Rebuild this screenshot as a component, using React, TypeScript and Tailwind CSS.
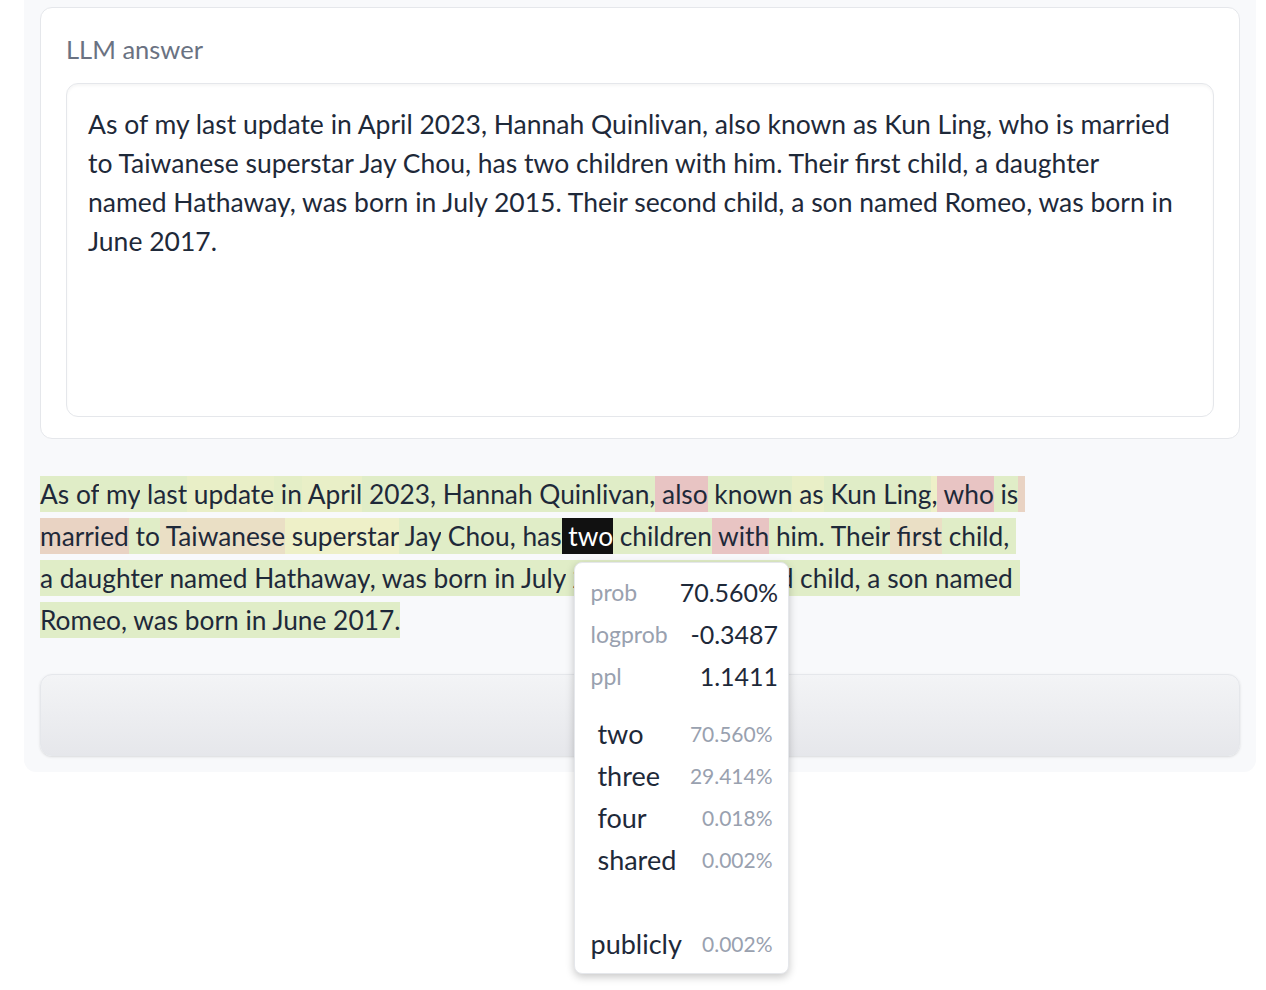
type Tok = [string, string]

const G = 'bg-[#e0edc7]'
const G2 = 'bg-[#e4eec6]'
const Y1 = 'bg-[#e9efc7]'
const Y2 = 'bg-[#eef0c8]'
const R = 'bg-[#e8c4c3]'
const O = 'bg-[#e9d3c3]'
const T = 'bg-[#eadfc5]'
const SEL = 'sel'

const LINES: Tok[][] = [
  [
    ['As', G], [' of', G], [' my', G], [' last', G], [' update', Y1], [' in', G2], [' April', Y1],
    [' 2023', G], [',', G], [' Hannah', G], [' Quin', G], ['livan', G], [',', G], [' also', R],
    [' known', G], [' as', Y1], [' Kun', G], [' Ling', G], [',', Y2], [' who', R], [' is', G], [' ', O],
  ],
  [
    ['married', O], [' to', G], [' Taiwan', T], ['ese', T], [' superstar', Y2], [' Jay', G], [' Chou', G],
    [',', G], [' has', G], [' two', SEL], [' children', G], [' with', R], [' him', G], ['.', G],
    [' Their', G], [' first', T], [' child', G], [',', G], [' ', G],
  ],
  [
    ['a', G], [' daughter', G], [' named', G], [' Hathaway', G], [',', G], [' was', G], [' born', G],
    [' in', G], [' July', G], [' 2015', G], ['.', G], [' Their', G], [' second', G], [' child', G],
    [',', G], [' a', G], [' son', G], [' named', G], [' ', G],
  ],
  [
    ['Romeo', G], [',', G], [' was', G], [' born', G], [' in', G], [' June', G], [' 2017', G], ['.', G],
  ],
]

const ANSWER = [
  'As of my last update in April 2023, Hannah Quinlivan, also known as Kun Ling, who is married',
  'to Taiwanese superstar Jay Chou, has two children with him. Their first child, a daughter',
  'named Hathaway, was born in July 2015. Their second child, a son named Romeo, was born in',
  'June 2017.',
]

const CANDIDATES = [
  { tok: ' two', p: '70.560%' },
  { tok: ' three', p: '29.414%' },
  { tok: ' four', p: '0.018%' },
  { tok: ' shared', p: '0.002%' },
  { tok: '\u00a0', p: '' },
  { tok: 'publicly', p: '0.002%' },
]

function Tooltip() {
  return (
    <div className="absolute left-[12px] top-[44px] z-10 w-[215px] rounded-lg border border-gray-200 bg-white pl-4 pr-4 pt-[8px] pb-[8px] shadow-[0_3px_8px_rgba(0,0,0,0.22)]">
      <div className="grid grid-cols-[auto_1fr] gap-x-3">
        {[
          ['prob', '70.560%'],
          ['logprob', '-0.3487'],
          ['ppl', '1.1411'],
        ].map(([k, v]) => (
          <div key={k} className="contents">
            <span className="text-[23px] leading-[42px] text-gray-400">{k}</span>
            <span className="text-right text-[25px] leading-[42px] text-gray-800">{v}</span>
          </div>
        ))}
      </div>
      <div className="mt-4 grid grid-cols-[auto_1fr] gap-x-2">
        {CANDIDATES.map((c, i) => (
          <div key={i} className="contents">
            <span className="whitespace-pre text-[27px] leading-[42px] text-gray-800">{c.tok}</span>
            <span className="text-right text-[21px] leading-[42px] text-gray-400">{c.p}</span>
          </div>
        ))}
      </div>
    </div>
  )
}

export default function App() {
  return (
    <div className="min-h-screen bg-white font-['Lato',sans-serif] text-gray-800">
      <div className="ml-[24px] mr-[10px] rounded-b-xl bg-[#f8f9fb] px-4 pt-[7px] pb-4">
        <div className="rounded-xl border border-gray-200 bg-white px-[25px] pt-[21px] pb-[21px]">
          <div className="text-[25.5px] leading-[40px] text-gray-500">LLM answer</div>
          <div className="mt-[14px] h-[334px] rounded-xl border border-gray-200 bg-white px-[21px] pt-[21px] shadow-[inset_0_2px_3px_rgba(0,0,0,0.04)]">
            {ANSWER.map((l) => (
              <div key={l} className="whitespace-nowrap text-[26.5px] leading-[39px] text-gray-800">
                {l}
              </div>
            ))}
          </div>
        </div>

        <div className="mt-[34px] text-[26.3px] leading-[42px]">
          {LINES.map((line, li) => (
            <div key={li} className="whitespace-pre">
              {line.map(([t, c], ti) =>
                c === SEL ? (
                  <span key={ti} className="relative bg-[#111111] py-[2px] text-white">
                    {t}
                    <Tooltip />
                  </span>
                ) : (
                  <span key={ti} className={`${c} py-[2px]`}>
                    {t}
                  </span>
                ),
              )}
            </div>
          ))}
        </div>

        <button className="mt-[33px] block h-[82px] w-full rounded-xl border border-gray-200 bg-gradient-to-b from-[#f3f4f6] to-[#e6e7eb] shadow-sm" />
      </div>
    </div>
  )
}
